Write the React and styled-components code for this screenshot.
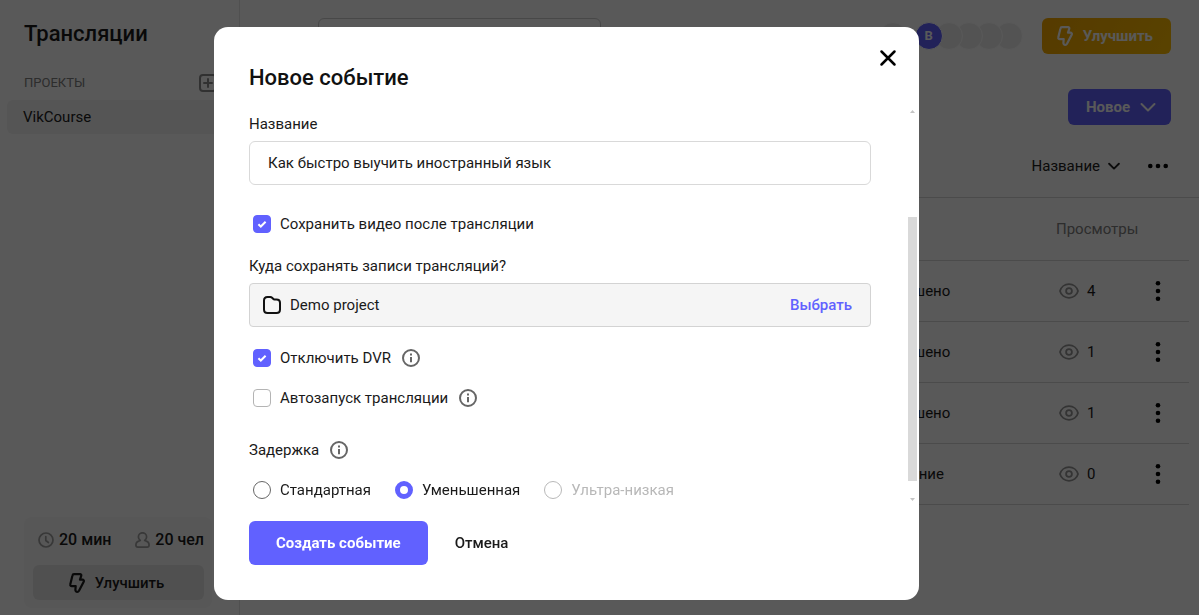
import React from 'react';
import styled, { createGlobalStyle } from 'styled-components';

const GlobalStyle = createGlobalStyle`
  * {
    box-sizing: border-box;
  }
  body {
    margin: 0;
    background: #fff;
  }
  body, button, input {
    font-family: Roboto, "Liberation Sans", sans-serif;
    font-size: 15px;
    line-height: 20px;
    color: #1a1a1a;
  }
  button {
    border: none;
    background: none;
    padding: 0;
    cursor: pointer;
  }
  svg {
    display: block;
    flex: none;
  }
`
const Page = styled.div`
  display: flex;
  height: 100vh;
  overflow: hidden;
`
const Sidebar = styled.aside`
  display: flex;
  flex-direction: column;
  width: 240px;
  flex: none;
  padding: 20px 7px 7px;
  border-right: 1px solid #e4e4e4;
`
const SidebarTitle = styled.h1`
  margin: 0 17px 25px;
  font-size: 22px;
  line-height: 28px;
  font-weight: 500;
`
const SectionHead = styled.div`
  display: flex;
  align-items: center;
  justify-content: space-between;
  margin: 0 15px 7px 17px;
  font-size: 13px;
  color: #808080;
`
const ProjectLink = styled.a`
  padding: 7px 16px;
  border-radius: 6px;
  background: #f3f3f3;
  color: #222;
  text-decoration: none;
`
const Plan = styled.div`
  width: 188px;
  margin: auto 0 0 17px;
  padding: 13px 8px 8px 9px;
  border-radius: 8px;
  background: #f9f9f9;
`
const Limits = styled.div`
  display: flex;
  justify-content: space-between;
  padding-left: 5px;
  margin-bottom: 15px;
`
const Limit = styled.span`
  display: flex;
  align-items: center;
  gap: 5px;
  font-size: 16px;
  font-weight: 500;
`
const PlanButton = styled.button`
  display: flex;
  align-items: center;
  justify-content: center;
  gap: 10px;
  width: 100%;
  height: 35px;
  padding-right: 4px;
  border-radius: 6px;
  background: #e6e6e6;
  font-weight: 500;
`
const Main = styled.main`
  flex: 1;
  min-width: 0;
`
const TopBar = styled.header`
  display: flex;
  align-items: center;
  padding: 18px 28px 0 78px;
  margin-bottom: 35px;
`
const Search = styled.input`
  width: 283px;
  height: 36px;
  border: 1px solid #cfcfcf;
  border-radius: 6px;
`
const Avatars = styled.div`
  display: flex;
  margin-left: auto;
  margin-right: 19px;
`
const Avatar = styled.span`
  display: flex;
  align-items: center;
  justify-content: center;
  position: relative;
  z-index: ${props => props.$layer};
  width: 28px;
  height: 28px;
  margin-left: ${props => props.$apart ? '8px' : '-8px'};
  border: 1px solid #fff;
  border-radius: 50%;
  background: ${props => props.$color || '#eeeeee'};
  color: #fff;
  font-size: 13px;
  font-weight: 700;
`
const ActionButton = styled.button`
  display: flex;
  align-items: center;
  gap: 10px;
  height: 36px;
  padding: ${props => props.$gold ? '0 18px 0 15px' : '0 15px 0 18px'};
  border-radius: 6px;
  background: ${props => props.$gold ? 'linear-gradient(120deg, #f5a800, #ffbe00)' : '#6161ff'};
  color: #fff;
  font-weight: 700;
`
const Actions = styled.div`
  display: flex;
  justify-content: flex-end;
  padding-right: 28px;
  margin-bottom: 31px;
`
const Sorting = styled.div`
  display: flex;
  align-items: center;
  justify-content: flex-end;
  gap: 28px;
  padding: 0 31px 21px 0;
  border-bottom: 1px solid #d8d8d8;
`
const SortButton = styled.button`
  display: flex;
  align-items: center;
  gap: 8px;
  color: #222;
`
const Events = styled.table`
  width: calc(100% - 10px);
  table-layout: fixed;
  border-collapse: collapse;

  th, td {
    height: 61px;
    padding: 0;
    border-bottom: 1px solid #d8d8d8;
    text-align: left;
  }
  th {
    height: 62px;
    color: #808080;
    font-weight: 400;
  }
`
const Col = styled.col`
  width: ${props => props.$width};
`
const Views = styled.span`
  display: flex;
  align-items: center;
  gap: 8px;
  padding-left: 3px;
`
const KebabButton = styled.button`
  display: block;
  margin: 0 auto;
`
const Overlay = styled.div`
  position: fixed;
  inset: 0;
  z-index: 10;
  display: flex;
  padding: 27px 280px 15px 214px;
  background: rgba(0, 0, 0, 0.65);
`
const Modal = styled.form`
  position: relative;
  display: flex;
  flex-direction: column;
  flex: 1;
  min-width: 0;
  padding: 37px 2px 35px 35px;
  border-radius: 14px;
  background: #fff;
`
const CloseButton = styled.button`
  position: absolute;
  top: 22px;
  right: 22px;
`
const ModalTitle = styled.h2`
  margin: 0 0 15px;
  font-size: 22px;
  line-height: 28px;
  font-weight: 500;
  color: #111;
`
const ModalBody = styled.div`
  display: flex;
  flex: 1;
  min-height: 0;
  gap: 37px;
  margin-bottom: 16px;
`
const Fields = styled.div`
  display: flex;
  flex-direction: column;
  flex: 1;
  min-width: 0;
  padding-top: 7px;
`
const Field = styled.div`
  display: flex;
  flex-direction: column;
  gap: 7px;
  margin-bottom: ${props => props.$gap};
`
const TextInput = styled.input`
  width: 100%;
  height: 44px;
  padding: 0 18px;
  border: 1px solid #d9d9d9;
  border-radius: 6px;
  background: #fff;
  outline: none;
`
const ProjectBox = styled.div`
  display: flex;
  align-items: center;
  gap: 9px;
  height: 44px;
  padding: 0 18px 0 13px;
  border: 1px solid #d3d3d3;
  border-radius: 4px;
  background: #f5f5f5;
`
const ChooseButton = styled.button`
  margin-left: auto;
  color: #6161ff;
  font-weight: 500;
`
const Line = styled.div`
  display: flex;
  align-items: center;
  gap: 11px;
  margin-bottom: ${props => props.$gap};
`
const Choice = styled.label`
  display: flex;
  align-items: center;
  gap: 9px;
  padding-left: 4px;
  color: ${props => props.$disabled ? '#b8b8b8' : '#1a1a1a'};
`
const Checkbox = styled.input.attrs({ type: 'checkbox' })`
  appearance: none;
  width: 18px;
  height: 18px;
  margin: 0;
  border: 1px solid #b4b4b4;
  border-radius: 4px;

  &:checked {
    border-color: #6161ff;
    background: #6161ff url("data:image/svg+xml,%3Csvg xmlns='http://www.w3.org/2000/svg' viewBox='0 0 16 16'%3E%3Cpath d='M4.4 8.2l2.4 2.3 4.8-4.7' fill='none' stroke='white' stroke-width='2'/%3E%3C/svg%3E") center / 16px no-repeat;
  }
`
const Radio = styled.input.attrs({ type: 'radio' })`
  appearance: none;
  width: 18px;
  height: 18px;
  margin: 0;
  border: 1px solid #666;
  border-radius: 50%;

  &:checked {
    border: 5px solid #6161ff;
  }
  &:disabled {
    border-color: #b8b8b8;
  }
`
const Delays = styled.div`
  display: flex;
  gap: 20px;
`
const ScrollBar = styled.div`
  display: flex;
  flex-direction: column;
  align-items: center;
  width: 9px;
  padding: 3px 0 4px;
`
const ScrollThumb = styled.div`
  width: 9px;
  height: 264px;
  margin: auto 0 17px;
  background: #d9d9d9;
`
const Footer = styled.div`
  display: flex;
  gap: 27px;
`
const SubmitButton = styled.button`
  height: 44px;
  padding: 0 27px;
  border-radius: 6px;
  background: #6161ff;
  color: #fff;
  font-weight: 700;
`
const CancelButton = styled.button`
  font-weight: 500;
`

const Bolt = () => (
  <svg width="16" height="20" viewBox="0 0 16 20" fill="none" stroke="currentColor" strokeWidth="2.200" strokeLinejoin="round">
    <path d="M5 1.200h6c1 0 1.500.8 1.200 1.700L11 6.700h2.400c1.200 0 1.800 1 1.300 2L10 17.700c-.4.700-.9 1.100-1.700 1.100-1.200 0-2-.9-1.900-2l.3-3.600H2.800c-1.100 0-1.800-1-1.500-2l2.100-8.500c.2-.9.800-1.500 1.600-1.500z" />
  </svg>
)
const Chevron = ({ width, stroke }) => (
  <svg width={width} height={width / 2 + 2} viewBox="0 0 16 10" fill="none" stroke="currentColor" strokeWidth={stroke} strokeLinecap="round" strokeLinejoin="round">
    <path d="M1.500 2l6.500 6.500L14.500 2" />
  </svg>
)
const Dots = ({ vertical }) => (
  <svg width={vertical ? 6 : 20} height={vertical ? 20 : 6} viewBox={vertical ? '0 0 6 20' : '0 0 20 6'} fill="#000">
    {[2.3, 10, 17.7].map(pos => <circle cx={vertical ? 3 : pos} cy={vertical ? pos : 3} r="2.3" key={pos} />)}
  </svg>
)
const Eye = () => (
  <svg width="20" height="16" viewBox="0 0 20 16" fill="none" stroke="#959595" strokeWidth="1.800">
    <path d="M1 8c1-4 4.600-6.800 9-6.800S18 4 19 8c-1 4-4.600 6.800-9 6.800S2 12 1 8z" />
    <circle cx="10" cy="8" r="2.900" />
  </svg>
)
const Info = () => (
  <svg width="18" height="18" viewBox="0 0 18 18" fill="none" stroke="#666">
    <circle cx="9" cy="9" r="8" strokeWidth="2" />
    <path d="M9 8v5.200M9 4.600v1.900" strokeWidth="2" />
  </svg>
)
const Clock = () => (
  <svg width="16" height="16" viewBox="0 0 16 16" fill="none" stroke="#a0a0a0" strokeWidth="1.700" strokeLinecap="round">
    <circle cx="8" cy="8" r="7" />
    <path d="M7.800 4.500V8.500l2.600 2" />
  </svg>
)
const Person = () => (
  <svg width="15" height="16" viewBox="0 0 15 16" fill="none" stroke="#a0a0a0" strokeWidth="1.700" strokeLinejoin="round">
    <path d="M5.300 8.400C3.900 7.400 3.400 6.200 3.400 4.900c0-2.300 1.700-4.100 4.100-4.100s4.100 1.800 4.100 4.100c0 1.300-.5 2.500-1.900 3.500 2.700.8 4.400 2.200 4.400 4.600 0 1.400-.7 2.100-2 2.100H2.900c-1.300 0-2-.7-2-2.100 0-2.400 1.700-3.800 4.400-4.600z" />
  </svg>
)
const Plus = () => (
  <svg width="18" height="18" viewBox="0 0 18 18" fill="none" stroke="#8c8c8c" strokeWidth="2" strokeLinecap="round">
    <rect x="1" y="1" width="16" height="16" rx="3" />
    <path d="M9 5v8M5 9h8" />
  </svg>
)
const Folder = () => (
  <svg width="18" height="18" viewBox="0 0 18 18" fill="none" stroke="#111" strokeWidth="2" strokeLinejoin="round">
    <path d="M4.500 1h2.800c.7 0 1.300.3 1.800.8l1 1c.4.400.9.600 1.400.600h2c2 0 3.500 1.400 3.500 3.400v6.700c0 2-1.500 3.500-3.500 3.500h-9C2.500 17 1 15.500 1 13.500v-9C1 2.500 2.500 1 4.500 1z" />
  </svg>
)
const Cross = () => (
  <svg width="18" height="18" viewBox="0 0 18 18" fill="none" stroke="#000" strokeWidth="2.500" strokeLinecap="round">
    <path d="M2.500 2.500l13 13M15.500 2.500l-13 13" />
  </svg>
)
const Arrow = ({ down }) => (
  <svg width="5" height="3" viewBox="0 0 5 3" fill="#c4c4c4">
    <path d={down ? 'M0 0h5L2.500 3z' : 'M0 3h5L2.500 0z'} />
  </svg>
)

const events = [
  { id: 1, status: 'Завершено', views: 4 },
  { id: 2, status: 'Завершено', views: 1 },
  { id: 3, status: 'Завершено', views: 1 },
  { id: 4, status: 'Ожидание', views: 0 }
];

const delays = [
  { id: 'standard', name: 'Стандартная' },
  { id: 'reduced', name: 'Уменьшенная' },
  { id: 'ultra', name: 'Ультра-низкая', disabled: true }
];

class EventForm extends React.Component {
  constructor(props) {
    super(props)
    this.state = {
      title: 'Как быстро выучить иностранный язык',
      save: true,
      noDvr: true,
      autostart: false,
      delay: 'reduced'
    }
    this.toggle = this.toggle.bind(this);
  }

  toggle(e) {
    this.setState({ [e.target.name]: e.target.checked });
  }

  render() {
    const { title, save, noDvr, autostart, delay } = this.state;
    const { close } = this.props;
    return (
      <Modal onSubmit={e => e.preventDefault()}>
        <CloseButton type="button" onClick={close}><Cross /></CloseButton>
        <ModalTitle>Новое событие</ModalTitle>
        <ModalBody>
          <Fields>
            <Field $gap="29px">
              <label htmlFor="title">Название</label>
              <TextInput id="title" value={title} onChange={e => this.setState({ title: e.target.value })} />
            </Field>
            <Line $gap="22px">
              <Choice><Checkbox name="save" checked={save} onChange={this.toggle} />Сохранить видео после трансляции</Choice>
            </Line>
            <Field $gap="21px">
              <span>Куда сохранять записи трансляций?</span>
              <ProjectBox>
                <Folder />
                <span>Demo project</span>
                <ChooseButton type="button">Выбрать</ChooseButton>
              </ProjectBox>
            </Field>
            <Line $gap="20px">
              <Choice><Checkbox name="noDvr" checked={noDvr} onChange={this.toggle} />Отключить DVR</Choice>
              <Info />
            </Line>
            <Line $gap="32px">
              <Choice><Checkbox name="autostart" checked={autostart} onChange={this.toggle} />Автозапуск трансляции</Choice>
              <Info />
            </Line>
            <Line $gap="20px">
              <span>Задержка</span>
              <Info />
            </Line>
            <Delays>
              {delays.map(item => (
                <Choice $disabled={item.disabled} key={item.id}>
                  <Radio
                    name="delay"
                    checked={delay === item.id}
                    disabled={item.disabled}
                    onChange={() => this.setState({ delay: item.id })}
                  />
                  {item.name}
                </Choice>
              ))}
            </Delays>
          </Fields>
          <ScrollBar>
            <Arrow />
            <ScrollThumb />
            <Arrow down />
          </ScrollBar>
        </ModalBody>
        <Footer>
          <SubmitButton type="submit">Создать событие</SubmitButton>
          <CancelButton type="button" onClick={close}>Отмена</CancelButton>
        </Footer>
      </Modal>
    )
  }
}

class App extends React.Component {
  constructor(props) {
    super(props)
    this.state = {
      open: true
    }
    this.setOpen = this.setOpen.bind(this);
  }

  setOpen(open) {
    this.setState({ open });
  }

  render() {
    const { open } = this.state;
    return (
      <Page>
        <GlobalStyle />
        <Sidebar>
          <SidebarTitle>Трансляции</SidebarTitle>
          <SectionHead>
            ПРОЕКТЫ
            <button><Plus /></button>
          </SectionHead>
          <ProjectLink href="#">VikCourse</ProjectLink>
          <Plan>
            <Limits>
              <Limit><Clock />20 мин</Limit>
              <Limit><Person />20 чел</Limit>
            </Limits>
            <PlanButton><Bolt />Улучшить</PlanButton>
          </Plan>
        </Sidebar>
        <Main>
          <TopBar>
            <Search />
            <Avatars>
              <Avatar $layer={6} />
              <Avatar $layer={5} $apart $color="#6161ff">В</Avatar>
              {[4, 3, 2, 1].map(layer => <Avatar $layer={layer} key={layer} />)}
            </Avatars>
            <ActionButton $gold><Bolt />Улучшить</ActionButton>
          </TopBar>
          <Actions>
            <ActionButton onClick={() => this.setOpen(true)}>Новое<Chevron width={16} stroke={2} /></ActionButton>
          </Actions>
          <Sorting>
            <SortButton>Название<Chevron width={12} stroke={2.5} /></SortButton>
            <button><Dots /></button>
          </Sorting>
          <Events>
            <colgroup>
              <Col />
              <Col $width="185px" />
              <Col $width="70px" />
              <Col $width="63px" />
            </colgroup>
            <thead>
              <tr>
                <th></th>
                <th></th>
                <th>Просмотры</th>
                <th></th>
              </tr>
            </thead>
            <tbody>
              {events.map(event => (
                <tr key={event.id}>
                  <td></td>
                  <td>{event.status}</td>
                  <td><Views><Eye />{event.views}</Views></td>
                  <td><KebabButton><Dots vertical /></KebabButton></td>
                </tr>
              ))}
            </tbody>
          </Events>
        </Main>
        {open && <Overlay><EventForm close={() => this.setOpen(false)} /></Overlay>}
      </Page>
    )
  }
}
export default App;
